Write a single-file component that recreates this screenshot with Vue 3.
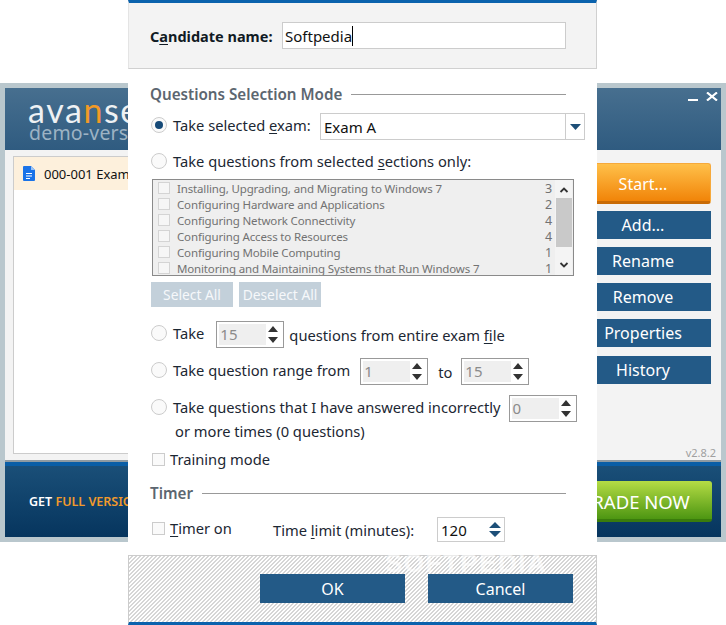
<script setup>
const sections = [
  ['Installing, Upgrading, and Migrating to Windows 7', 3],
  ['Configuring Hardware and Applications', 2],
  ['Configuring Network Connectivity', 4],
  ['Configuring Access to Resources', 4],
  ['Configuring Mobile Computing', 1],
  ['Monitoring and Maintaining Systems that Run Windows 7', 1],
]
const sideButtons = ['Add...', 'Rename', 'Remove', 'Properties', 'History']
</script>

<template>
  <div class="stage">
    <div class="window">
      <header class="win-head">
        <div class="logo">
          <div class="logo-main">ava<span class="logo-n">n</span>set</div>
          <div class="logo-sub">demo-version</div>
        </div>
        <div class="win-controls">
          <svg width="10" height="2" viewBox="0 0 10 2"><rect width="10" height="2" fill="#fff" /></svg>
          <svg width="12" height="9" viewBox="0 0 12 9"><path d="M1 0.5 L11 8.5 M11 0.5 L1 8.5" stroke="#fff" stroke-width="2.2" /></svg>
        </div>
      </header>
      <div class="win-body">
        <div class="exam-list">
          <div class="exam-row">
            <svg width="12" height="15" viewBox="0 0 12 15"><path d="M1 0 H8 L12 4 V14 a1 1 0 0 1 -1 1 H1 a1 1 0 0 1 -1 -1 V1 a1 1 0 0 1 1 -1 Z" fill="#1a73e8" /><path d="M8 0 V4 H12 Z" fill="#9cc4f5" /><path d="M3 7.5 H9 M3 10 H9 M3 12.5 H7" stroke="#fff" stroke-width="1.2" /></svg>
            <span>000-001 Exam A</span>
          </div>
        </div>
        <div class="side">
          <button class="start">Start...</button>
          <button v-for="b in sideButtons" :key="b" class="side-btn">{{ b }}</button>
          <div class="version">v2.8.2</div>
        </div>
      </div>
      <footer class="win-foot">
        <span class="get">GET <b>FULL VERSION</b></span>
        <button class="upgrade">UPGRADE NOW</button>
      </footer>
    </div>

    <section class="dialog">
      <div class="cand">
        <label class="cand-label">C<u>a</u>ndidate name:</label>
        <div class="cand-input"><span>Softpedia</span><i class="caret"></i></div>
      </div>

      <div class="main">
        <div class="title t-mode"><span>Questions Selection Mode</span><i></i></div>

        <div class="row r-exam">
          <span class="radio on"></span>
          <span>Take selected <u>e</u>xam:</span>
          <div class="combo"><span>Exam A</span><div class="combo-arrow"><svg width="11" height="6" viewBox="0 0 11 6"><path d="M0 0 H11 L5.5 6 Z" fill="#1d4f78" /></svg></div></div>
        </div>

        <div class="row r-sections">
          <span class="radio"></span>
          <span>Take questions from selected <u>s</u>ections only:</span>
        </div>

        <div class="listbox">
          <div class="list-rows">
            <div v-for="s in sections" :key="s[0]" class="list-row">
              <span class="mini-check"></span>
              <span class="list-name">{{ s[0] }}</span>
              <span class="list-num">{{ s[1] }}</span>
            </div>
          </div>
          <div class="scroll">
            <svg width="16" height="18" viewBox="0 0 16 18"><path d="M4.5 12 L8 8.5 L11.5 12" fill="none" stroke="#333" stroke-width="1.8" /></svg>
            <div class="thumb"></div>
            <svg width="16" height="18" viewBox="0 0 16 18"><path d="M4.5 7 L8 10.5 L11.5 7" fill="none" stroke="#333" stroke-width="1.8" /></svg>
          </div>
        </div>

        <div class="sel-btns">
          <button class="sel">Select All</button>
          <button class="sel">Deselect All</button>
        </div>

        <div class="row r-take">
          <span class="radio"></span>
          <span class="lift">Take</span>
          <div class="spin"><span class="spin-val">15</span><svg width="12" height="21" viewBox="0 0 12 21"><path d="M1 8 L6 2 L11 8 Z M1 13 L6 19 L11 13 Z" fill="#333" /></svg></div>
          <span class="after-spin">questions from entire exam <u>f</u>ile</span>
        </div>

        <div class="row r-range">
          <span class="radio"></span>
          <span class="lift">Take question range from</span>
          <div class="spin s1"><span class="spin-val">1</span><svg width="12" height="21" viewBox="0 0 12 21"><path d="M1 8 L6 2 L11 8 Z M1 13 L6 19 L11 13 Z" fill="#333" /></svg></div>
          <span class="to">to</span>
          <div class="spin s3"><span class="spin-val">15</span><svg width="12" height="21" viewBox="0 0 12 21"><path d="M1 8 L6 2 L11 8 Z M1 13 L6 19 L11 13 Z" fill="#333" /></svg></div>
        </div>

        <div class="row r-incorrect">
          <span class="radio"></span>
          <span class="lift">Take questions that I have answered incorrectly</span>
          <div class="spin s2"><span class="spin-val">0</span><svg width="12" height="21" viewBox="0 0 12 21"><path d="M1 8 L6 2 L11 8 Z M1 13 L6 19 L11 13 Z" fill="#333" /></svg></div>
        </div>
        <div class="more">or more times (0 questions)</div>

        <div class="row r-training"><span class="check"></span><span>Training mode</span></div>

        <div class="title t-timer"><span>Timer</span><i></i></div>

        <div class="row r-timer">
          <span class="check"></span>
          <span class="timer-on"><u>T</u>imer on</span>
          <span class="limit">Time <u>l</u>imit (minutes):</span>
          <div class="spin-time"><span>120</span><svg width="14" height="19" viewBox="0 0 14 19"><path d="M1 8 L7 2 L13 8 Z M1 11 L7 17 L13 11 Z" fill="#1d4f78" /></svg></div>
        </div>
      </div>

      <footer class="dlg-foot">
        <button class="dlg-btn">OK</button>
        <button class="dlg-btn">Cancel</button>
        <span class="mark">SOFTPEDIA</span>
      </footer>
    </section>
  </div>
</template>

<style>
html, body { margin: 0; background: #fff; }
</style>

<style scoped>
.stage {
  position: relative;
  width: 726px;
  height: 625px;
  overflow: hidden;
  background: #fff;
  font-family: "Noto Sans", "Open Sans", sans-serif;
  font-size: 14px;
  color: #1c2733;
}
button { font-family: inherit; border: 0; padding: 0; }
u { text-underline-offset: 2px; }

.window {
  position: absolute;
  left: 0; top: 83px;
  width: 726px; height: 459px;
  box-sizing: border-box;
  padding: 5px;
  background: #b9c7cd;
  display: flex;
  flex-direction: column;
}
.win-head {
  height: 62px;
  background: linear-gradient(#476f8f, #2f5b80);
  position: relative;
  flex: none;
  overflow: hidden;
}
.logo { padding: 7px 0 0 23px; line-height: 1; white-space: nowrap; }
.logo-main { font-family: "Lato", sans-serif; font-weight: 400; font-size: 34px; letter-spacing: 1.6px; line-height: 30px; color: #eef1f3; }
.logo-n { color: #f29a26; }
.logo-sub { font-size: 19.5px; line-height: 17px; margin-top: -1px; color: #9db3c4; letter-spacing: 0.2px; padding-left: 1px; }
.win-controls { position: absolute; right: 3px; top: 4px; display: flex; gap: 8px; align-items: flex-end; }

.win-body {
  flex: 1;
  min-height: 0;
  display: flex;
  background: #f3f3f3;
  border-bottom: 2px solid #8f9ba3;
  padding: 6px 10px 6px 8px;
  gap: 10px;
}
.exam-list { flex: 1; background: #fff; border: 1px solid #ccc; }
.exam-row {
  height: 33px;
  background: #fdf0dc;
  display: flex;
  align-items: center;
  gap: 9px;
  padding-left: 9px;
  font-size: 13px;
  color: #111;
}
.side { width: 136px; display: flex; flex-direction: column; position: relative; padding-top: 7px; }
.start {
  height: 41px;
  padding-top: 2px;
  border: 1px solid #f6a93b;
  border-bottom: 3px solid #c96b05;
  border-radius: 3px;
  background: linear-gradient(#ffc04a, #f18408);
  color: #fff;
  font-size: 16px;
  margin-bottom: 7px;
}
.side-btn {
  height: 28px;
  margin-bottom: 8px;
  background: #235a87;
  color: #fff;
  font-size: 16px;
}
.side-btn:nth-of-type(5) { margin-bottom: 9px; }
.version { position: absolute; right: -5px; bottom: -6px; font-size: 11px; color: #a0a0a0; }

.win-foot {
  height: 71px;
  flex: none;
  border-top: 4px solid #0a5ea6;
  background: linear-gradient(#1a4f78, #06355e);
  display: flex;
  align-items: center;
  justify-content: space-between;
  padding: 0 9px 0 24px;
}
.get { color: #fff; font-size: 12.5px; font-weight: 600; }
.get b { color: #f19a2c; font-weight: 600; }
.upgrade {
  width: 180px;
  height: 41px;
  padding-top: 2px;
  border-radius: 3px;
  border-bottom: 3px solid #3a7c0c;
  background: linear-gradient(#b5dc45, #4d9612);
  color: #fff;
  font-size: 18.5px;
}

.dialog {
  position: absolute;
  left: 128px; top: 0;
  width: 469px; height: 625px;
  background: #fff;
  display: flex;
  flex-direction: column;
}
.cand {
  box-sizing: border-box;
  flex: none;
  border-top: 3px solid #0a62ad;
  background: #f3f3f3;
  border-right: 1px solid #d0d0d0;
  border-left: 1px solid #e4e4e4;
  border-bottom: 1px solid #d0d0d0;
  height: 69px;
  display: flex;
  align-items: center;
  padding: 0 30px 0 21px;
}
.cand-label { font-weight: 700; width: 132px; font-size: 14.5px; color: #101a24; flex: none; }
.cand-input {
  flex: 1;
  height: 27px;
  box-sizing: border-box;
  border: 1px solid #ccc;
  background: #fff;
  display: flex;
  align-items: center;
  padding-left: 2px;
  font-size: 15px;
  color: #111;
}
.cand-input span { padding-top: 1px; }
.caret { width: 1px; height: 20px; background: #000; }

.main { flex: 1; padding: 0 12px 0 22px; display: flex; flex-direction: column; }
.title { height: 20px; display: flex; align-items: center; gap: 9px; padding-right: 19px; font-weight: 600; font-size: 15.2px; color: #5c6670; flex: none; }
.title i { flex: 1; height: 1px; background: #999; }
.t-mode { margin-top: 15px; }
.t-timer { margin-top: 14px; }
.row { display: flex; align-items: center; flex: none; font-size: 14.7px; }
.radio {
  width: 16px; height: 16px;
  box-sizing: border-box;
  border: 1px solid #ccc;
  border-radius: 50%;
  background: #fafafa;
  margin: 0 6px 0 1px;
  flex: none;
  display: flex;
  align-items: center;
  justify-content: center;
}
.radio.on::after { content: ""; width: 8px; height: 8px; border-radius: 50%; background: #164a78; }
.r-exam { height: 27px; margin-top: 9px; }
.r-exam .radio { margin-bottom: 3px; }
.r-exam > span:nth-child(2) { margin-bottom: 3px; }
.combo {
  width: 265px; height: 27px;
  box-sizing: border-box;
  border: 1px solid #ccc;
  display: flex;
  align-items: center;
  margin-left: auto;
  padding-left: 3px;
  font-size: 15px;
  color: #111;
}
.combo span { flex: 1; }
.combo-arrow { width: 18px; height: 25px; border-left: 1px solid #ccc; display: flex; align-items: center; justify-content: center; }
.r-sections { height: 20px; margin-top: 11px; }
.listbox {
  margin: 8px 0 0 2px;
  width: 422px;
  height: 97px;
  box-sizing: border-box;
  border: 1px solid #8a8a8a;
  background: #efefef;
  display: flex;
  flex: none;
  overflow: hidden;
}
.list-rows { flex: 1; overflow: hidden; min-width: 0; }
.list-row { height: 16px; display: flex; align-items: center; padding-left: 5px; font-size: 11.5px; letter-spacing: -0.15px; color: #727272; }
.mini-check { width: 12px; height: 12px; box-sizing: border-box; border: 1px solid #d4d4d4; background: #f6f6f6; margin-right: 7px; flex: none; }
.list-name { flex: 1; white-space: nowrap; }
.list-num { width: 8px; margin-right: 2px; font-size: 12.5px; }
.scroll { width: 17px; background: #f4f4f4; margin-right: 1px; display: flex; flex-direction: column; align-items: center; }
.scroll svg { flex: none; }
.thumb { width: 16px; height: 49px; background: #c9c9c9; flex: none; margin-bottom: 9px; }
.sel-btns { display: flex; gap: 6px; margin: 6px 0 0 1px; flex: none; }
.sel { width: 82px; height: 25px; background: #c3d0da; color: #f6f8fa; font-size: 13.8px; }
.r-take { height: 27px; margin-top: 14px; }
.r-range { height: 27px; margin-top: 10px; }
.r-incorrect { height: 27px; margin-top: 10px; }
.lift { margin-bottom: 4px; }
.r-take .radio, .r-range .radio, .r-incorrect .radio { margin-bottom: 3px; }
.spin {
  width: 68px; height: 27px;
  box-sizing: border-box;
  border: 1px solid #999;
  padding: 2px 4px 2px 2px;
  display: flex;
  align-items: center;
  justify-content: space-between;
  flex: none;
  margin-left: 12px;
}
.spin-val { width: 47px; height: 21px; line-height: 21px; background: #efefef; color: #8b8b8b; font-size: 15px; padding-left: 1px; box-sizing: border-box; }
.after-spin { margin-left: 5px; }
.to { margin-left: 10px; }
.s1 { margin-left: 10px; }
.s2 { margin-left: 8px; }
.s3 { margin-left: 9px; }
.more { height: 20px; line-height: 20px; margin: -1px 0 0 25px; flex: none; font-size: 14.7px; }
.r-training { height: 20px; margin-top: 8px; }
.check { width: 13px; height: 13px; box-sizing: border-box; border: 1px solid #ccc; background: #fafafa; margin: 0 5px 0 2px; flex: none; }
.r-timer { height: 25px; margin-top: 14px; }
.r-timer .check { margin-bottom: 3px; }
.timer-on { width: 103px; margin-bottom: 4px; }
.limit { width: 164px; }
.spin-time {
  width: 68px; height: 25px;
  box-sizing: border-box;
  border: 1px solid #ccc;
  display: flex;
  align-items: center;
  justify-content: space-between;
  padding: 0 2px 0 3px;
  font-size: 15px;
  color: #111;
}

.dlg-foot {
  position: relative;
  height: 70px;
  box-sizing: border-box;
  flex: none;
  border: 1px solid #ccc;
  border-bottom: 3px solid #0a62ad;
  background: repeating-linear-gradient(135deg, #fff 0 1.6px, #d6d6d6 1.6px 2.83px);
  display: flex;
  justify-content: flex-end;
  align-items: flex-start;
  gap: 23px;
  padding: 18px 23px 0 0;
}
.dlg-btn { width: 145px; height: 29px; background: #235a87; color: #fff; font-size: 16px; position: relative; z-index: 1; }
.mark {
  position: absolute;
  left: 256px; top: -8px;
  font-family: "Liberation Sans", sans-serif;
  font-weight: 700;
  font-size: 26px;
  letter-spacing: 1.5px;
  color: rgba(255, 255, 255, 0.6);
}
</style>
